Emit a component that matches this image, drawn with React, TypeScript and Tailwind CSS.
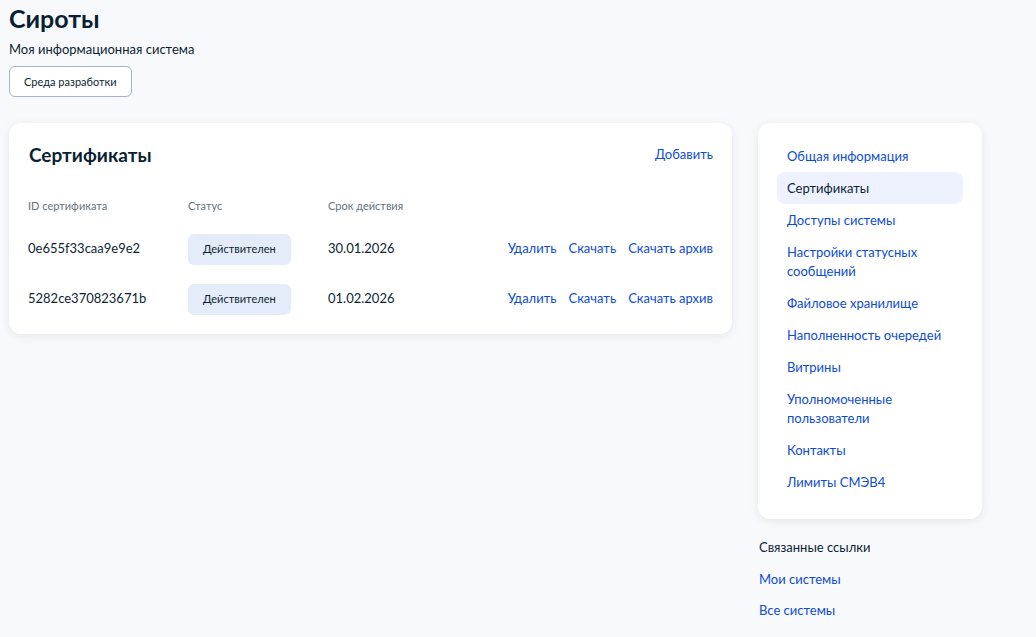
const CERTS = [
  { id: "0e655f33caa9e9e2", status: "Действителен", until: "30.01.2026" },
  { id: "5282ce370823671b", status: "Действителен", until: "01.02.2026" },
];

const MENU = [
  "Общая информация",
  "Сертификаты",
  "Доступы системы",
  "Настройки статусных сообщений",
  "Файловое хранилище",
  "Наполненность очередей",
  "Витрины",
  "Уполномоченные пользователи",
  "Контакты",
  "Лимиты СМЭВ4",
];

export default function App() {
  return (
    <div
      className="min-h-[637px] bg-[#f8f9fc] text-[#0b1f33] px-[9px]"
      style={{ fontFamily: "Lato, 'Noto Sans', sans-serif" }}
    >
      <h1 className="pt-[2px] text-[25px] leading-[32px] font-bold">Сироты</h1>
      <p className="mt-[5px] text-[13px] leading-[20px]">Моя информационная система</p>
      <button className="mt-[7px] h-[31px] px-[14px] rounded-[6px] border border-[#a3b3d6] bg-white text-[11px] leading-none">
        Среда разработки
      </button>

      <div className="mt-[26px] flex items-start gap-[26px]">
        <div className="w-[723px] bg-white rounded-[12px] shadow-[0_2px_10px_rgba(11,31,51,0.08)] pl-[20px] pr-[19px] pt-[20px] pb-[10px]">
          <div className="flex items-center justify-between h-[24px]">
            <h2 className="text-[19px] font-bold leading-[24px]">Сертификаты</h2>
            <a className="text-[13px] text-[#0d4cd3] cursor-pointer">Добавить</a>
          </div>
          <div className="mt-[31px] mb-[10px] flex text-[11px] leading-[16px] text-[#66727f]">
            <div className="w-[160px] -ml-px">ID сертификата</div>
            <div className="w-[140px]">Статус</div>
            <div>Срок действия</div>
          </div>
          {CERTS.map((c) => (
            <div key={c.id} className="h-[50px] flex items-center text-[13px]">
              <div className="w-[160px] -ml-px">{c.id}</div>
              <div className="w-[140px]">
                <span className="inline-flex items-center h-[31px] px-[15px] rounded-[6px] bg-[#e5ecf9] text-[11px]">
                  {c.status}
                </span>
              </div>
              <div className="flex-1">{c.until}</div>
              <div className="flex gap-[12px] text-[#0d4cd3]">
                <a className="cursor-pointer">Удалить</a>
                <a className="cursor-pointer">Скачать</a>
                <a className="cursor-pointer">Скачать архив</a>
              </div>
            </div>
          ))}
        </div>

        <div className="w-[224px]">
          <div className="bg-white rounded-[12px] shadow-[0_2px_10px_rgba(11,31,51,0.08)] px-[19px] pt-[17px] pb-[21px]">
            {MENU.map((m) => (
              <div
                key={m}
                className={
                  m === "Сертификаты"
                    ? "px-[10px] py-[6.5px] text-[13px] leading-[19px] rounded-[8px] bg-[#edf2fe] text-[#0b1f33]"
                    : "px-[10px] py-[6.5px] text-[13px] leading-[19px] text-[#0d4cd3] cursor-pointer"
                }
              >
                {m}
              </div>
            ))}
          </div>
          <div className="mt-[18px] pl-px text-[13px] leading-[20px]">
            <div>Связанные ссылки</div>
            <div className="mt-[12px] text-[#0d4cd3]">Мои системы</div>
            <div className="mt-[11px] text-[#0d4cd3]">Все системы</div>
          </div>
        </div>
      </div>
    </div>
  );
}
